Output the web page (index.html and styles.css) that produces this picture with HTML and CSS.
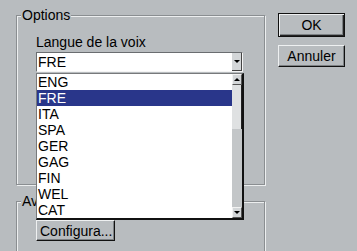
FILE: index.html
```html
<!DOCTYPE html>
<html>
<head>
<meta charset="utf-8">
<link rel="stylesheet" href="styles.css">
</head>
<body>
<div class="dialog">
  <div class="main">
    <fieldset class="group options">
      <legend>Options</legend>
      <div class="group-body">
        <div class="label">Langue de la voix</div>
        <div class="combo-wrap">
          <div class="combo">
            <span class="combo-text">FRE</span>
            <span class="combo-btn"><span class="tri-down"></span></span>
          </div>
          <div class="droplist">
            <ul class="items">
              <li>ENG</li>
              <li class="sel">FRE</li>
              <li>ITA</li>
              <li>SPA</li>
              <li>GER</li>
              <li>GAG</li>
              <li>FIN</li>
              <li>WEL</li>
              <li>CAT</li>
            </ul>
            <div class="scrollbar">
              <span class="sb-btn"><span class="tri-up"></span></span>
              <span class="sb-thumb"></span>
              <span class="sb-track"></span>
              <span class="sb-btn"><span class="tri-down"></span></span>
            </div>
          </div>
        </div>
      </div>
    </fieldset>
    <fieldset class="group advanced">
      <legend>Avancé</legend>
      <div class="group-body">
        <button class="btn config">Configura...</button>
      </div>
    </fieldset>
  </div>
  <div class="side">
    <button class="btn ok">OK</button>
    <button class="btn cancel">Annuler</button>
  </div>
</div>
</body>
</html>
```

FILE: styles.css
```css
html, body {
  margin: 0;
  padding: 0;
}
body {
  background: #b8bcbf;
  font-family: "Liberation Sans", Arial, sans-serif;
  font-size: 14px;
  color: #000;
  width: 357px;
  height: 251px;
  overflow: hidden;
}
.dialog {
  display: flex;
  align-items: flex-start;
  height: 251px;
}
.main {
  padding-left: 16px;
  width: 249px;
  flex: none;
}
.group {
  margin: 0;
  padding: 0;
  border: 1px solid #8a8e91;
  box-shadow: 1px 1px 0 #eceeef, inset 1px 1px 0 #eceeef;
  min-inline-size: 0;
  box-sizing: border-box;
}
.group legend {
  margin-left: 4px;
  padding: 0 1px;
  line-height: 14px;
  background: #b8bcbf;
}
.group-body {
  padding: 12px 0 0 19px;
}
.options {
  margin-top: 8px;
  height: 177px;
}
.label {
  line-height: 16px;
  margin-bottom: 2px;
}
.combo-wrap {
  position: relative;
  width: 207px;
}
.combo {
  height: 20px;
  box-sizing: border-box;
  background: #fff;
  border: 1px solid;
  border-color: #6a6d70 #f4f4f4 #f4f4f4 #6a6d70;
  display: flex;
  align-items: center;
  justify-content: space-between;
}
.combo-text {
  padding-left: 1px;
  line-height: 16px;
}
.combo-btn {
  width: 10px;
  height: 18px;
  box-sizing: border-box;
  background: #d3d6d8;
  border-right: 1px solid #444;
  border-bottom: 1px solid #444;
  display: flex;
  align-items: center;
  justify-content: center;
}
.tri-down {
  width: 0;
  height: 0;
  border-left: 3px solid transparent;
  border-right: 3px solid transparent;
  border-top: 3px solid #000;
}
.tri-up {
  width: 0;
  height: 0;
  border-left: 3px solid transparent;
  border-right: 3px solid transparent;
  border-bottom: 3px solid #000;
}
.droplist {
  position: absolute;
  top: calc(100% + 1px);
  left: 0;
  z-index: 5;
  width: 208px;
  box-sizing: border-box;
  background: #fff;
  border-top: 1px solid #77797b;
  border-left: 1px solid #77797b;
  border-right: 2px solid #111;
  border-bottom: 2px solid #111;
  display: flex;
}
.items {
  list-style: none;
  margin: 0;
  padding: 0;
  flex: 1;
}
.items li {
  height: 16px;
  line-height: 16px;
  padding-left: 1px;
}
.items li.sel {
  background: #29368a;
  color: #fff;
}
.scrollbar {
  width: 10px;
  display: flex;
  flex-direction: column;
  background: #c6c9cb;
}
.sb-btn {
  height: 11px;
  box-sizing: border-box;
  background: #d3d6d8;
  border-top: 1px solid #f2f2f2;
  border-left: 1px solid #f2f2f2;
  border-right: 1px solid #555;
  border-bottom: 1px solid #555;
  display: flex;
  align-items: center;
  justify-content: center;
}
.sb-thumb {
  height: 44px;
  background: #dfe1e2;
  border-right: 1px solid #222;
  box-sizing: border-box;
}
.sb-track {
  flex: 1;
  background: #c3c6c8;
}
.advanced {
  margin-top: 9px;
  height: 80px;
}
.btn {
  font-family: "Liberation Sans", Arial, sans-serif;
  font-size: 14px;
  color: #000;
  background: #b8bcbf;
  box-sizing: border-box;
  margin: 0;
  padding: 0;
  display: block;
}
.config {
  width: 79px;
  height: 21px;
  border: 1px solid;
  border-color: #eef0f1 #111 #111 #eef0f1;
  box-shadow: inset -1px -1px 0 #7d8184;
  text-align: left;
  padding-left: 3px;
  line-height: 18px;
}
.side {
  margin-left: 13px;
  padding-top: 13px;
  display: flex;
  flex-direction: column;
}
.ok {
  width: 67px;
  height: 24px;
  border: 1px solid #111;
  box-shadow: inset 1px 1px 0 #eef0f1, inset -1px -1px 0 #222, inset -2px -2px 0 #7d8184;
}
.cancel {
  margin-top: 8px;
  width: 67px;
  height: 22px;
  border: 1px solid;
  border-color: #eef0f1 #111 #111 #eef0f1;
  box-shadow: inset -1px -1px 0 #7d8184;
}
```
